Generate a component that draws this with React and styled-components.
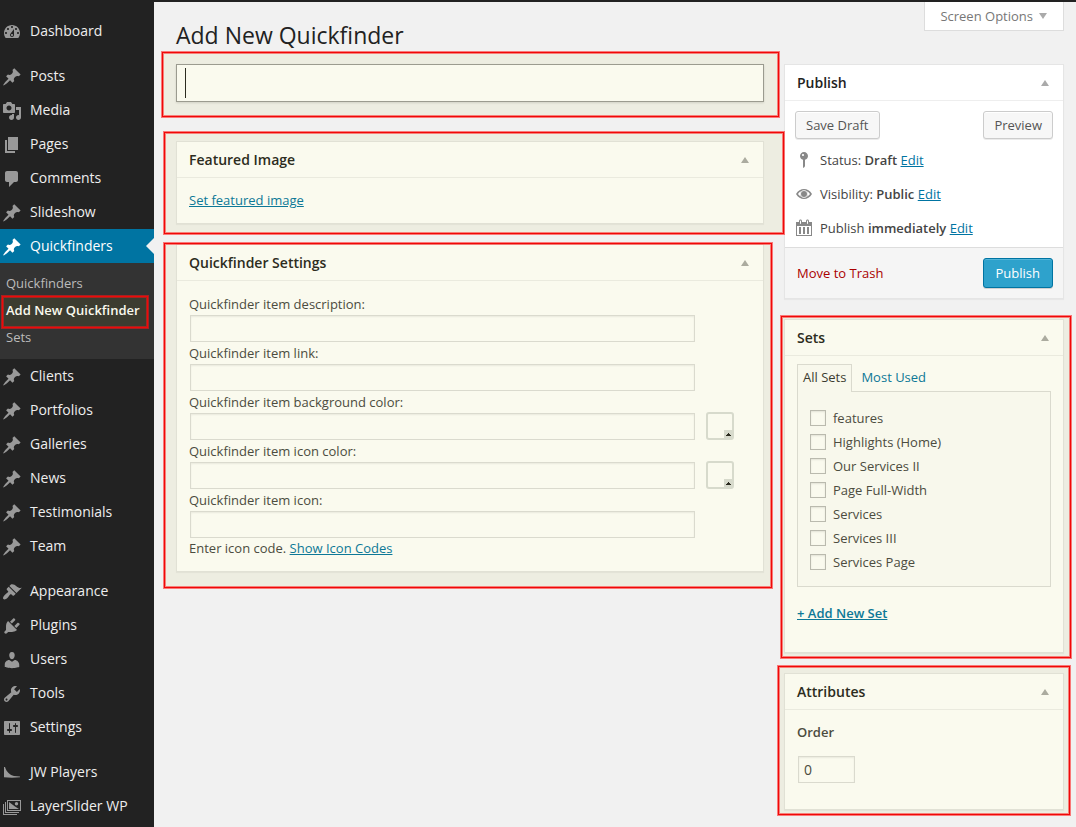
import React from "react";
import styled, { createGlobalStyle, css } from "styled-components";

const GlobalStyle = createGlobalStyle`
  *, *::before, *::after { box-sizing: border-box; }
  html, body { margin: 0; background: #f1f1f1; }
  body {
    font-family: "Open Sans", "Noto Sans", sans-serif;
    font-size: 13px;
    line-height: 19px;
    color: #444;
  }
  button, input { font: inherit; color: inherit; }
  h1, h2, h3, p, ul, fieldset { margin: 0; padding: 0; border: 0; }
  ul { list-style: none; }
`;

const ICONS = {
  dashboard:
    "M3.76 16h12.48c1.1-1.37 1.76-3.11 1.76-5 0-4.42-3.58-8-8-8s-8 3.58-8 8c0 1.89.66 3.63 1.76 5zM10 4c.55 0 1 .45 1 1s-.45 1-1 1-1-.45-1-1 .45-1 1-1zM6 6c.55 0 1 .45 1 1s-.45 1-1 1-1-.45-1-1 .45-1 1-1zm8 0c.55 0 1 .45 1 1s-.45 1-1 1-1-.45-1-1 .45-1 1-1zm-5.37 5.55L12 7v6c0 1.1-.9 2-2 2s-2-.9-2-2c0-.57.24-1.08.63-1.45zM4 10c.55 0 1 .45 1 1s-.45 1-1 1-1-.45-1-1 .45-1 1-1zm12 0c.55 0 1 .45 1 1s-.45 1-1 1-1-.45-1-1 .45-1 1-1zm-5 3c0-.55-.45-1-1-1s-1 .45-1 1 .45 1 1 1 1-.45 1-1z",
  pin: "M10.44 3.02l1.82-1.82 6.36 6.35-1.83 1.82c-1.05-.68-2.48-.57-3.41.36l-.75.75c-.92.93-1.04 2.35-.35 3.41l-1.83 1.82-2.41-2.41-2.8 2.79c-.42.42-3.38 2.71-3.8 2.29s1.86-3.39 2.28-3.81l2.79-2.79L4.1 9.36l1.83-1.82c1.05.69 2.48.57 3.4-.36l.75-.75c.93-.92 1.05-2.35.36-3.41z",
  media:
    "M13 11V4c0-.55-.45-1-1-1h-1.67L9 1H5L3.67 3H2c-.55 0-1 .45-1 1v7c0 .55.45 1 1 1h10c.55 0 1-.45 1-1zM7 4.5c1.38 0 2.5 1.12 2.5 2.5S8.38 9.5 7 9.5 4.5 8.38 4.5 7 5.62 4.5 7 4.5zM14 6h5v10.5c0 1.38-1.12 2.5-2.5 2.5S14 17.88 14 16.5s1.12-2.5 2.5-2.5c.17 0 .34.02.5.05V9h-3V6zm-4 8.05V13h2v3.5c0 1.38-1.12 2.5-2.5 2.5S7 17.88 7 16.5 8.12 14 9.5 14c.17 0 .34.02.5.05z",
  pages: "M6 15V2h10v13H6zm-1 1h8v2H3V5h2v11z",
  comments:
    "M5 2h9c1.1 0 2 .9 2 2v7c0 1.1-.9 2-2 2h-2l-5 5v-5H5c-1.1 0-2-.9-2-2V4c0-1.1.9-2 2-2z",
  appearance:
    "M14.48 11.06L7.41 3.99l1.5-1.5c.5-.56 2.3-.47 3.51.32 1.21.8 1.43 1.28 2.91 2.1 1.18.64 2.45 1.26 4.45.85zm-.71.71L6.7 4.7 4.93 6.47c-.39.39-.39 1.02 0 1.41l1.06 1.06c.39.39.39 1.03 0 1.42-.6.6-1.43 1.11-2.21 1.69-.35.26-.7.53-1.01.84C1.43 14.23.4 16.08 1.4 17.07c.99 1 2.84-.03 4.18-1.36.31-.31.58-.66.85-1.02.57-.78 1.08-1.61 1.69-2.21.39-.39 1.02-.39 1.41 0l1.06 1.06c.39.39 1.02.39 1.41 0z",
  plugins:
    "M13.11 4.36L9.87 7.6 8 5.73l3.24-3.24c.35-.34 1.05-.2 1.56.32.52.51.66 1.21.31 1.55zm-8 1.77l.91-1.12 9.01 9.01-1.19.84c-.71.71-2.63 1.16-3.82 1.16H6.14L4.9 17.26c-.59.59-1.54.59-2.12 0-.59-.58-.59-1.53 0-2.12l1.24-1.24v-3.88c0-1.13.4-3.19 1.09-3.89zm7.26 3.97l3.24-3.24c.34-.35 1.04-.21 1.55.31.52.51.66 1.21.31 1.55l-3.24 3.25z",
  users:
    "M10 9.25c-2.27 0-2.73-3.44-2.73-3.44C7 4.02 7.82 2 9.97 2c2.16 0 2.98 2.02 2.71 3.81 0 0-.41 3.44-2.68 3.44zm0 2.57L12.72 10c2.39 0 4.52 2.33 4.52 4.53v2.49s-3.65 1.13-7.24 1.13c-3.65 0-7.24-1.13-7.24-1.13v-2.49c0-2.25 1.94-4.48 4.47-4.48z",
  tools:
    "M16.68 9.77c-1.34 1.34-3.3 1.67-4.95.99l-5.41 6.52c-.99.99-2.59.99-3.58 0s-.99-2.59 0-3.57l6.52-5.42c-.68-1.65-.35-3.61.99-4.95 1.28-1.28 3.12-1.62 4.72-1.06l-2.89 2.89 2.82 2.82 2.86-2.87c.53 1.58.18 3.39-1.08 4.65zM3.81 16.21c.4.39 1.04.39 1.43 0 .4-.4.4-1.04 0-1.43-.39-.4-1.03-.4-1.43 0-.39.39-.39 1.03 0 1.43z",
  settings:
    "M18 16V4c0-.55-.45-1-1-1H3c-.55 0-1 .45-1 1v12c0 .55.45 1 1 1h14c.55 0 1-.45 1-1zM8 11h1c.55 0 1 .45 1 1s-.45 1-1 1H8v1.5c0 .28-.22.5-.5.5s-.5-.22-.5-.5V13H6c-.55 0-1-.45-1-1s.45-1 1-1h1V5.5c0-.28.22-.5.5-.5s.5.22.5.5V11zm5-2h-1c-.55 0-1-.45-1-1s.45-1 1-1h1V5.5c0-.28.22-.5.5-.5s.5.22.5.5V7h1c.55 0 1 .45 1 1s-.45 1-1 1h-1v5.500c0 .28-.22.5-.5.5s-.5-.22-.5-.5V9z",
  player: "M2 4h1c1.500 5 5 8 9 9l6 .5v.8c-5 .5-11 .5-16 0z",
  slider:
    "M5 3h14v11H5zM6 4v9h12V4zM3 5h1v10h13v1H3zM1 7h1v10h13v1H1zM7 5l4 3 2 1.500 4 2.500H7zM14.500 5a1.700 1.700 0 1 1 0 3.400a1.700 1.700 0 1 1 0-3.400z",
  status:
    "M14 6c0 1.860-1.280 3.410-3 3.860V16c0 1-2 2-2 2V9.860c-1.720-.45-3-2-3-3.860 0-2.210 1.790-4 4-4s4 1.790 4 4zM8 5c0 .55.45 1 1 1s1-.45 1-1-.45-1-1-1-1 .45-1 1z",
  visibility:
    "M2 10c3.800-6.700 12.200-6.700 16 0-3.800 6.700-12.200 6.700-16 0zM4 10c1 1.500 2.200 2.400 3.600 2.900A4 4 0 0 1 7.600 7.100C6.200 7.600 5 8.500 4 10zM16 10c-1-1.500-2.200-2.400-3.600-2.900A4 4 0 0 1 12.400 12.900c1.400-.5 2.600-1.400 3.600-2.900zM10 6.200a3.800 3.800 0 1 0 0 7.600a3.800 3.800 0 1 0 0-7.600zM10 7a3 3 0 1 1 0 6a3 3 0 1 1 0-6z",
  calendar:
    "M15 4h3v14H2V4h3V3c0-.83.67-1.5 1.5-1.5S8 2.170 8 3v1h4V3c0-.83.67-1.5 1.5-1.5S15 2.170 15 3v1zM6 3v2.500c0 .28.22.5.5.5s.5-.22.5-.5V3c0-.28-.22-.5-.5-.5S6 2.720 6 3zm7 0v2.500c0 .28.22.5.5.5s.5-.22.5-.5V3c0-.28-.22-.5-.5-.5s-.5.22-.5.5zm4 14V8H3v9h14zM7 16V9H5v7h2zm4 0V9H9v7h2zm4 0V9h-2v7h2z",
};

const Glyph = styled.svg`
  flex: none;
  width: 20px;
  height: 20px;
  fill: currentColor;
`;

const Icon = ({ name }) => (
  <Glyph viewBox="0 0 20 20" aria-hidden="true">
    <path fillRule="evenodd" d={ICONS[name]} />
  </Glyph>
);

const Page = styled.div`
  display: flex;
  min-height: 100vh;
  border-top: 2px solid #222;
`;

/* Tinted red frame laid over the part of the page it points out. */
const Callout = styled.div`
  position: relative;

  &::after {
    content: "";
    position: absolute;
    inset: ${(p) => p.$inset};
    z-index: 2;
    pointer-events: none;
    background: rgba(180, 180, 10, 0.07);
    border: 1px solid #f00808;
    box-shadow: 0 0 0 1px rgba(255, 20, 20, 0.55),
      inset 0 0 0 1px rgba(255, 20, 20, 0.5);
  }
`;

/* Sidebar */
const Sidebar = styled.nav`
  flex: none;
  width: 154px;
  padding-top: 12px;
  background: #222;
`;

const MenuGroup = styled.ul`
  margin-bottom: 11px;
`;

const MenuLink = styled.a`
  position: relative;
  display: flex;
  gap: 8px;
  height: 34px;
  padding: 8px 8px 0 2px;
  font-size: 14px;
  line-height: 18px;
  color: #eee;
  text-decoration: none;

  svg { color: #999; }

  ${(p) =>
    p.$current &&
    css`
      color: #fff;
      background: #0074a2;
      svg { color: #fff; }
      &::after {
        content: "";
        position: absolute;
        right: 0;
        top: 9px;
        border: 8px solid transparent;
        border-left-width: 0;
        border-right-color: #f1f1f1;
      }
    `}
`;

const SubMenu = styled.ul`
  padding: 7px 0 8px;
  background: #333;
`;

const SubLink = styled.a`
  display: block;
  padding: 4px 6px;
  white-space: nowrap;
  color: ${(p) => (p.$current ? "#fff" : "#bbb")};
  font-weight: ${(p) => (p.$current ? 600 : 400)};
  text-decoration: none;
`;

/* Content */
const Content = styled.main`
  flex: 1;
  min-width: 0;
  padding: 0 12px 12px 22px;
`;

const TopRow = styled.header`
  display: flex;
  justify-content: space-between;
  align-items: flex-start;
  height: 62px;
`;

const PageTitle = styled.h1`
  padding-top: 19px;
  font-size: 23px;
  line-height: 29px;
  font-weight: 400;
  color: #222;
`;

const ScreenOptions = styled.button`
  display: flex;
  align-items: center;
  gap: 6px;
  height: 29px;
  padding: 0 16px 0 15px;
  border: 1px solid #ddd;
  border-top: 0;
  background: #fff;
  color: #777;

  svg { fill: #aaa; }
`;

const Columns = styled.div`
  display: grid;
  grid-template-columns: minmax(0, 1fr) 280px;
  gap: 20px;
  align-items: start;
`;

const Stack = styled.div`
  display: flex;
  flex-direction: column;
  gap: 20px;
`;

const TitleBlock = styled.div`
  margin-bottom: 19px;
`;

const TitleInput = styled.input`
  display: block;
  width: 100%;
  height: 38px;
  padding: 3px 8px;
  border: 1px solid #999;
  outline: 0;
  border-radius: 0;
  background: #fff linear-gradient(#222, #222) 8px center / 1px 30px no-repeat;
  box-shadow: 0 1px 2px rgba(0, 0, 0, 0.12);
  font-size: 22px;
  caret-color: transparent;
`;

const Card = styled.section`
  border: 1px solid #e5e5e5;
  background: #fff;
  box-shadow: 0 1px 1px rgba(0, 0, 0, 0.04);
`;

const CardHead = styled.div`
  display: flex;
  align-items: center;
  justify-content: space-between;
  height: 36px;
  padding: 0 14px 0 12px;
  border-bottom: 1px solid #eee;
`;

const CardTitle = styled.h2`
  font-size: 14px;
  line-height: 20px;
  font-weight: 600;
  color: #222;
`;

const Toggle = styled.button`
  display: flex;
  padding: 0;
  border: 0;
  background: none;
  svg { fill: #aaa; }
`;

const Panel = ({ title, children }) => (
  <Card>
    <CardHead>
      <CardTitle>{title}</CardTitle>
      <Toggle type="button" aria-label={`Toggle panel: ${title}`}>
        <svg width="8" height="6" aria-hidden="true">
          <path d="M4 0l4 6H0z" />
        </svg>
      </Toggle>
    </CardHead>
    {children}
  </Card>
);

const CardBody = styled.div`
  padding: 13px 12px;
`;

const Link = styled.a`
  color: #0074a2;
  font-weight: ${(p) => (p.$strong ? 600 : 400)};
`;

/* Quickfinder settings */
const SettingsBody = styled.div`
  padding: 12px;
`;

const FieldLabel = styled.label`
  display: block;
  line-height: 22px;
`;

const FieldRow = styled.div`
  display: flex;
  align-items: flex-end;
  gap: 11px;
  height: 27px;
  padding-left: 1px;
`;

const TextInput = styled.input`
  width: ${(p) => p.$width || "90%"};
  height: 27px;
  padding: 2px 5px;
  border: 1px solid #ddd;
  border-radius: 0;
  background: #fff;
  box-shadow: inset 0 1px 2px rgba(0, 0, 0, 0.07);
  font-size: 14px;
`;

const Swatch = styled.button`
  flex: none;
  display: flex;
  align-items: flex-end;
  justify-content: flex-end;
  width: 28px;
  height: 28px;
  padding: 0;
  border: 2px solid #dadddb;
  border-radius: 3px;
  background: #fff;

  svg { background: #dadddb; }
`;

const Hint = styled.p`
  line-height: 20px;
  padding-bottom: 1px;
`;

/* Publish */
const PublishBody = styled.div`
  padding: 10px 10px 2px;
`;

const ButtonRow = styled.div`
  display: flex;
  justify-content: space-between;
  align-items: center;
  margin-bottom: 4px;
`;

const Button = styled.button`
  height: ${(p) => (p.$primary ? "30px" : "28px")};
  padding: ${(p) => (p.$primary ? "0 12px" : "0 10px")};
  border: 1px solid ${(p) => (p.$primary ? "#0074a2" : "#ccc")};
  border-radius: 3px;
  background: ${(p) => (p.$primary ? "#2ea2cc" : "#f7f7f7")};
  color: ${(p) => (p.$primary ? "#fff" : "#555")};
  box-shadow: ${(p) =>
    p.$primary
      ? "inset 0 1px 0 rgba(120, 200, 230, 0.5), 0 1px 0 rgba(0, 0, 0, 0.15)"
      : "inset 0 1px 0 #fff, 0 1px 0 rgba(0, 0, 0, 0.08)"};
`;

const MetaRow = styled.div`
  display: flex;
  align-items: center;
  gap: 6px;
  height: 34px;
  margin-left: -1px;

  svg { color: #888; }
  b { font-weight: 600; }
`;

const PublishFooter = styled.div`
  display: flex;
  align-items: center;
  justify-content: space-between;
  height: 51px;
  padding: 0 10px 0 12px;
  border-top: 1px solid #ddd;
  background: #f5f5f5;
`;

const TrashLink = styled.a`
  color: #a00;
  text-decoration: none;
`;

/* Sets */
const SetsBody = styled.div`
  padding: 8px 12px 29px;
`;

const Tabs = styled.div`
  display: flex;
  gap: 3px;
`;

const Tab = styled.button`
  position: relative;
  height: 28px;
  margin-bottom: -1px;
  padding: 0 5px 2px;
  border: 1px solid ${(p) => (p.$active ? "#ddd" : "transparent")};
  border-bottom: 0;
  background: ${(p) => (p.$active ? "#fdfdfd" : "none")};
  color: ${(p) => (p.$active ? "#333" : "#0074a2")};
`;

const CheckPanel = styled.ul`
  margin-bottom: 17px;
  padding: 14px 12px 12px;
  border: 1px solid #ddd;
  background: #fdfdfd;
`;

const CheckLabel = styled.label`
  display: flex;
  align-items: center;
  gap: 7px;
  height: 24px;
`;

const CheckBox = styled.input`
  appearance: none;
  width: 16px;
  height: 16px;
  margin: 0;
  border: 1px solid #bbb;
  background: #fff;
  box-shadow: inset 0 1px 2px rgba(0, 0, 0, 0.1);
`;

/* Attributes */
const AttributesBody = styled.div`
  padding: 13px 12px 26px;
`;

const OrderLabel = styled.label`
  display: block;
  margin-bottom: 14px;
  font-weight: 600;
`;

const menu = [
  [["dashboard", "Dashboard"]],
  [
    ["pin", "Posts"],
    ["media", "Media"],
    ["pages", "Pages"],
    ["comments", "Comments"],
    ["pin", "Slideshow"],
    ["pin", "Quickfinders"],
    ["pin", "Clients"],
    ["pin", "Portfolios"],
    ["pin", "Galleries"],
    ["pin", "News"],
    ["pin", "Testimonials"],
    ["pin", "Team"],
  ],
  [
    ["appearance", "Appearance"],
    ["plugins", "Plugins"],
    ["users", "Users"],
    ["tools", "Tools"],
    ["settings", "Settings"],
  ],
  [
    ["player", "JW Players"],
    ["slider", "LayerSlider WP"],
  ],
];

const fields = [
  { id: "description", label: "Quickfinder item description:" },
  { id: "link", label: "Quickfinder item link:" },
  { id: "background", label: "Quickfinder item background color:", color: true },
  { id: "icon-color", label: "Quickfinder item icon color:", color: true },
  { id: "icon", label: "Quickfinder item icon:" },
];

const sets = [
  "features",
  "Highlights (Home)",
  "Our Services II",
  "Page Full-Width",
  "Services",
  "Services III",
  "Services Page",
];

const meta = [
  ["status", "Status:", "Draft"],
  ["visibility", "Visibility:", "Public"],
  ["calendar", "Publish", "immediately"],
];

export default function App() {
  return (
    <>
      <GlobalStyle />
      <Page>
        <Sidebar>
          {menu.map((group, i) => (
            <MenuGroup key={i}>
              {group.map(([icon, label]) => {
                const current = label === "Quickfinders";
                return (
                  <li key={label}>
                    <MenuLink href="#" $current={current}>
                      <Icon name={icon} />
                      {label}
                    </MenuLink>
                    {current && (
                      <SubMenu>
                        <li>
                          <SubLink href="#">Quickfinders</SubLink>
                        </li>
                        <Callout as="li" $inset="-1px 6px -4px 2px">
                          <SubLink href="#" $current>
                            Add New Quickfinder
                          </SubLink>
                        </Callout>
                        <li>
                          <SubLink href="#">Sets</SubLink>
                        </li>
                      </SubMenu>
                    )}
                  </li>
                );
              })}
            </MenuGroup>
          ))}
        </Sidebar>

        <Content>
          <TopRow>
            <PageTitle>Add New Quickfinder</PageTitle>
            <ScreenOptions type="button">
              Screen Options
              <svg width="8" height="6" aria-hidden="true">
                <path d="M0 0h8L4 6z" />
              </svg>
            </ScreenOptions>
          </TopRow>

          <Columns>
            <Stack>
              <TitleBlock>
                <Callout $inset="-12px -15px -15px -14px">
                  <TitleInput type="text" aria-label="Title" />
                </Callout>
              </TitleBlock>

              <Callout $inset="-9px -20px -10px -12px">
                <Panel title="Featured Image">
                  <CardBody>
                    <Link href="#">Set featured image</Link>
                  </CardBody>
                </Panel>
              </Callout>

              <Callout $inset="-1px -8px -16px -12px">
                <Panel title="Quickfinder Settings">
                  <SettingsBody>
                    {fields.map((f) => (
                      <div key={f.id}>
                        <FieldLabel htmlFor={f.id}>{f.label}</FieldLabel>
                        <FieldRow>
                          <TextInput id={f.id} type="text" />
                          {f.color && (
                            <Swatch type="button" aria-label="Pick a color">
                              <svg width="8" height="8" aria-hidden="true">
                                <path d="M2 6h5V5H6V4H5V3H4v1H3v1H2z" fill="#222" />
                              </svg>
                            </Swatch>
                          )}
                        </FieldRow>
                      </div>
                    ))}
                    <Hint>
                      Enter icon code. <Link href="#">Show Icon Codes</Link>
                    </Hint>
                  </SettingsBody>
                </Panel>
              </Callout>
            </Stack>

            <Stack>
              <Panel title="Publish">
                <PublishBody>
                  <ButtonRow>
                    <Button type="button">Save Draft</Button>
                    <Button type="button">Preview</Button>
                  </ButtonRow>
                  {meta.map(([icon, label, value]) => (
                    <MetaRow key={icon}>
                      <Icon name={icon} />
                      <span>
                        {label} <b>{value}</b> <Link href="#">Edit</Link>
                      </span>
                    </MetaRow>
                  ))}
                </PublishBody>
                <PublishFooter>
                  <TrashLink href="#">Move to Trash</TrashLink>
                  <Button type="button" $primary>
                    Publish
                  </Button>
                </PublishFooter>
              </Panel>

              <Callout $inset="-3px -7px -5px -3px">
                <Panel title="Sets">
                  <SetsBody>
                    <Tabs>
                      <Tab type="button" $active>
                        All Sets
                      </Tab>
                      <Tab type="button">Most Used</Tab>
                    </Tabs>
                    <CheckPanel>
                      {sets.map((s) => (
                        <li key={s}>
                          <CheckLabel>
                            <CheckBox type="checkbox" />
                            {s}
                          </CheckLabel>
                        </li>
                      ))}
                    </CheckPanel>
                    <Link href="#" $strong>
                      + Add New Set
                    </Link>
                  </SetsBody>
                </Panel>
              </Callout>

              <Callout $inset="-7px -6px -5px -6px">
                <Panel title="Attributes">
                  <AttributesBody>
                    <OrderLabel htmlFor="order">Order</OrderLabel>
                    <FieldRow>
                      <TextInput id="order" type="text" defaultValue="0" $width="57px" />
                    </FieldRow>
                  </AttributesBody>
                </Panel>
              </Callout>
            </Stack>
          </Columns>
        </Content>
      </Page>
    </>
  );
}
